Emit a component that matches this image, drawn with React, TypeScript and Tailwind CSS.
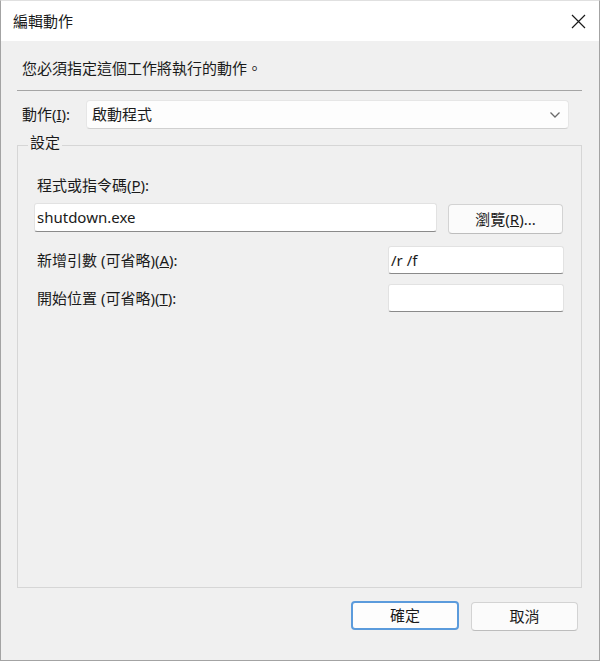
import React from 'react';

const font = { fontFamily: '"Noto Sans", "Noto Sans CJK TC", sans-serif' };

const TextBox: React.FC<{ value?: string; className?: string }> = ({ value, className }) => (
  <div
    className={`flex items-center bg-white border border-[#e2e2e2] border-b-[#8a8a8a] rounded-[3px] pl-[2px] text-[15px] text-[#1a1a1a] ${className ?? ''}`}
  >
    {value}
  </div>
);

const Button: React.FC<{ children: React.ReactNode; primary?: boolean; className?: string }> = ({ children, primary, className }) => (
  <div
    className={`flex items-center justify-center rounded-[4px] text-[15px] text-[#1a1a1a] ${
      primary ? 'bg-[#fdfdfd] border-2 border-[#5b9bdc]' : 'bg-[#fbfbfb] border border-[#d3d3d3] border-b-[#bdbdbd]'
    } ${className ?? ''}`}
  >
    {children}
  </div>
);

const App: React.FC = () => {
  return (
    <div style={font} className="w-[600px] h-[661px] flex flex-col bg-[#f0f0f0] border-x border-b border-[#a3a3a3] border-t border-t-[#e0e0e0] overflow-hidden leading-none">
      {/* title bar */}
      <div className="h-[40px] bg-white flex items-center justify-between pl-[12px] pr-[13px]">
        <span className="text-[15px] text-[#1a1a1a]">編輯動作</span>
        <svg width="15" height="15" viewBox="0 0 15 15" className="text-[#1a1a1a]">
          <path d="M1 1 L14 14 M14 1 L1 14" stroke="currentColor" strokeWidth="1.2" fill="none" />
        </svg>
      </div>

      <div className="flex flex-col pl-[16px] pr-[17px]">
        <div className="mt-[15px] h-[24px] flex items-center pl-[5px] text-[15px] text-[#1a1a1a]">
          您必須指定這個工作將執行的動作。
        </div>

        <div className="mt-[10px] h-px bg-[#a5a5a5]" />

        {/* action combo */}
        <div className="mt-[9px] h-[29px] flex items-center">
          <div className="w-[69px] pl-[5px] text-[15px] text-[#1a1a1a]">動作(<span className="underline">I</span>):</div>
          <div className="flex-1 mr-[13px] h-[29px] flex items-center justify-between bg-[#fdfdfd] border border-[#e6e6e6] border-b-[#d0d0d0] rounded-[4px] pl-[5px] pr-[7px]">
            <span className="text-[15px] text-[#1a1a1a]">啟動程式</span>
            <svg width="12" height="8" viewBox="0 0 12 8">
              <path d="M1.5 1.5 L6 6 L10.5 1.5" stroke="#6a6a6a" strokeWidth="1.3" fill="none" />
            </svg>
          </div>
        </div>

        {/* settings group */}
        <div className="relative mt-[16px] h-[443px] border border-[#d6d6d6]">
          <span className="absolute -top-[11px] left-[10px] px-[2px] bg-[#f0f0f0] text-[15px] text-[#1a1a1a]">設定</span>

          <div className="flex flex-col pl-[16px] pr-[17px]">
            <div className="mt-[29px] h-[20px] flex items-center pl-[3px] text-[15px] text-[#1a1a1a]">
              程式或指令碼(<span className="underline">P</span>):
            </div>

            <div className="mt-[8px] flex items-start gap-[11px]">
              <TextBox value="shutdown.exe" className="w-[403px] h-[29px] text-[15.5px]" />
              <Button className="w-[115px] h-[30px] mt-[1px]">
                瀏覽(<span className="underline">R</span>)...
              </Button>
            </div>

            <div className="mt-[12px] flex items-center justify-between">
              <span className="pl-[3px] text-[15px] text-[#1a1a1a]">
                新增引數 (可省略)(<span className="underline">A</span>):
              </span>
              <TextBox value="/r /f" className="w-[176px] h-[28px]" />
            </div>

            <div className="mt-[10px] flex items-center justify-between">
              <span className="pl-[3px] text-[15px] text-[#1a1a1a]">
                開始位置 (可省略)(<span className="underline">T</span>):
              </span>
              <TextBox className="w-[176px] h-[28px]" />
            </div>
          </div>
        </div>

        {/* dialog buttons */}
        <div className="mt-[13px] flex justify-end gap-[12px] pr-[4px]">
          <Button primary className="w-[108px] h-[29px]">確定</Button>
          <Button className="w-[107px] h-[29px] mt-[1px]">取消</Button>
        </div>
      </div>
    </div>
  );
};

export default App;
